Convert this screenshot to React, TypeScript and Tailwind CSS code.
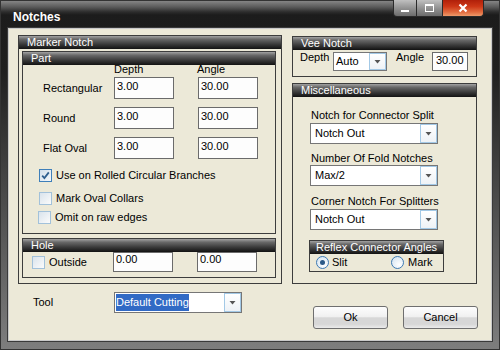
import React from 'react';

const Header: React.FC<{ title: string; center?: boolean }> = ({ title, center }) => (
  <div
    className={
      center
        ? 'relative z-10 h-[13px] shrink-0 flex items-center justify-center text-white text-[11px] leading-[13px] bg-[linear-gradient(#a2a2a2,#686868_25%,#383838_65%,#121212)]'
        : 'relative z-10 h-[13px] shrink-0 flex items-center pl-[8px] text-white text-[11px] leading-[13px] bg-[linear-gradient(#a2a2a2,#686868_25%,#383838_65%,#121212)]'
    }
  >
    {title}
  </div>
);

const Group: React.FC<{ title: string; className?: string; children?: React.ReactNode }> = ({
  title,
  className = '',
  children,
}) => (
  <div className={`flex flex-col border border-[#3d3d3d] ${className}`}>
    <Header title={title} />
    {children}
  </div>
);

const TextBox: React.FC<{ value: string; className: string }> = ({ value, className }) => (
  <div className={`shrink-0 border border-[#6b6b6b] bg-[#fdfdfd] text-[11px] leading-[13px] ${className}`}>
    {value}
  </div>
);

const Arrow = () => (
  <div className="w-[17px] shrink-0 flex items-center justify-center border border-[#a3c9e6] bg-[linear-gradient(#ffffff,#eef2f6)]">
    <svg width="7" height="4" viewBox="0 0 7 4">
      <path d="M0.5 0h6L3.5 3.5z" fill="#555" />
    </svg>
  </div>
);

const Combo: React.FC<{ value: string; className: string; selected?: boolean }> = ({
  value,
  className,
  selected,
}) => (
  <div className={`flex shrink-0 border border-[#767676] bg-white ${className}`}>
    {selected ? (
      <div className="flex-1 flex items-stretch py-[1px] pl-[1px]">
        <span className="bg-[#316ac5] text-white flex items-center">{value}</span>
      </div>
    ) : (
      <div className="flex-1 flex items-center pl-[4px]">{value}</div>
    )}
    <Arrow />
  </div>
);

const Check: React.FC<{ checked?: boolean }> = ({ checked }) =>
  checked ? (
    <span className="w-[13px] h-[13px] shrink-0 flex items-center justify-center border border-[#3f7fb9] bg-[linear-gradient(135deg,#d2dfeb,#f4f7fa)]">
      <svg width="9" height="9" viewBox="0 0 9 9">
        <path d="M1.2 4.6L3.4 7L7.8 1.4" fill="none" stroke="#2f5f8f" strokeWidth="1.8" />
      </svg>
    </span>
  ) : (
    <span className="w-[13px] h-[13px] shrink-0 border border-[#a2c1da] bg-[linear-gradient(135deg,#d9e3ec,#fbfbfb)]" />
  );

const Radio: React.FC<{ checked?: boolean }> = ({ checked }) => (
  <span className="w-[13px] h-[13px] shrink-0 rounded-full border border-[#3d7ab4] bg-[radial-gradient(circle_at_65%_70%,#ffffff,#cfe0ef)] flex items-center justify-center">
    {checked && <span className="w-[5px] h-[5px] rounded-full bg-[#2c5a88]" />}
  </span>
);

const Btn: React.FC<{ label: string }> = ({ label }) => (
  <div className="w-[75px] h-[23px] rounded-[3px] border border-[#6f6f6f] flex items-center justify-center bg-[linear-gradient(#fdfdfd,#f1f1f1_45%,#d7d7d7_52%,#d7d7d7_82%,#ebebeb)]">
    {label}
  </div>
);

const PartRow: React.FC<{ label: string; depth: string; angle: string; className?: string }> = ({
  label,
  depth,
  angle,
  className = '',
}) => (
  <div className={`flex items-center pl-[20px] h-[22px] ${className}`}>
    <div className="w-[71px]">{label}</div>
    <TextBox value={depth} className="w-[60px] h-[22px] pl-[2px] pt-[2px]" />
    <TextBox value={angle} className="ml-[24px] w-[60px] h-[22px] pl-[2px] pt-[2px]" />
  </div>
);

export default function App() {
  return (
    <div className="w-[500px] h-[350px] flex flex-col overflow-hidden font-['Liberation_Sans',Arial,sans-serif] text-[11px] leading-[13px] text-black shadow-[inset_0_0_0_1px_#333] bg-[linear-gradient(#8c8c8c_0px,#5a5a5a_7px,#2c2c2c_12px,#1c1c1c_15px,#1f1f1f_70px,#7e7e7e_350px)]">
      {/* title bar */}
      <div className="h-[27px] shrink-0 flex items-start">
        <div className="pl-[13px] pt-[10px] text-[12px] leading-[14px] font-bold text-white">Notches</div>
        <div className="ml-auto mr-[16px] flex h-[17px]">
          <div className="w-[24px] h-[17px] rounded-bl-[4px] border border-t-0 border-[#2a2a2a] bg-[linear-gradient(#c0c0c0,#939393_50%,#6c6c6c)] flex items-end justify-center pb-[4px]">
            <div className="w-[8px] h-[2px] bg-white" />
          </div>
          <div className="w-[25px] h-[17px] border-b border-[#2a2a2a] bg-[linear-gradient(#c0c0c0,#939393_50%,#6c6c6c)] flex items-center justify-center">
            <div className="w-[9px] h-[8px] border border-t-2 border-white" />
          </div>
          <div className="w-[42px] h-[17px] rounded-br-[4px] border border-t-0 border-[#2a2a2a] bg-[linear-gradient(#b0200a,#cc3616_40%,#e06a3e_75%,#ee9a6a)] flex items-center justify-center">
            <svg width="10" height="10" viewBox="0 0 10 10">
              <path d="M1.5 1.5L8.5 8.5M8.5 1.5L1.5 8.5" stroke="#fff" strokeWidth="2.2" />
            </svg>
          </div>
        </div>
      </div>

      {/* client area */}
      <div className="ml-[7px] w-[486px] h-[315px] shrink-0 border border-[#3a3a3a]">
        <div className="h-full border border-[#c9c9c9] bg-[#ece9d8] flex flex-col pt-[6px] pl-[9px]">
          <div className="flex items-start gap-[10px]">
            {/* left: marker notch */}
            <Group title="Marker Notch" className="w-[264px] h-[249px]">
              <div className="mt-[2px] ml-[3px] w-[254px] h-[183px] border border-[#3d3d3d] flex flex-col">
                <Header title="Part" />
                <div className="-mt-[2px] flex pl-[91px] h-[13px]">
                  <div className="w-[83px]">Depth</div>
                  <div>Angle</div>
                </div>
                <PartRow label="Rectangular" depth="3.00" angle="30.00" className="mt-[1px]" />
                <PartRow label="Round" depth="3.00" angle="30.00" className="mt-[8px]" />
                <PartRow label="Flat Oval" depth="3.00" angle="30.00" className="mt-[8px]" />
                <div className="mt-[10px] ml-[16px] flex items-center gap-[4px]">
                  <Check checked />
                  <span>Use on Rolled Circular Branches</span>
                </div>
                <div className="mt-[10px] ml-[16px] flex items-center gap-[4px]">
                  <Check />
                  <span>Mark Oval Collars</span>
                </div>
                <div className="mt-[6px] ml-[15px] flex items-center gap-[4px]">
                  <Check />
                  <span>Omit on raw edges</span>
                </div>
              </div>
              <Group title="Hole" className="mt-[4px] ml-[3px] w-[254px] h-[40px]">
                <div className="flex items-start h-[20px]">
                  <div className="w-[90px] pl-[9px] pt-[4px] flex items-center gap-[4px]">
                    <Check />
                    <span>Outside</span>
                  </div>
                  <TextBox value="0.00" className="w-[60px] h-[20px] pl-[2px]" />
                  <TextBox value="0.00" className="ml-[24px] w-[60px] h-[20px] pl-[2px]" />
                </div>
              </Group>
            </Group>

            {/* right column */}
            <div className="flex flex-col w-[185px]">
              <Group title="Vee Notch" className="mt-[1px] h-[41px]">
                <div className="mt-[2px] flex items-start pl-[7px]">
                  <div className="w-[33px] -mt-[1px]">Depth</div>
                  <Combo value="Auto" className="w-[54px] h-[19px] [&>div:first-child]:pl-[2px]" />
                  <div className="ml-[9px] w-[36px] -mt-[1px]">Angle</div>
                  <TextBox value="30.00" className="w-[36px] h-[19px] pl-[3px] pt-[1px]" />
                </div>
              </Group>
              <Group title="Miscellaneous" className="mt-[6px] h-[201px]">
                <div className="pl-[17px] flex flex-col items-start">
                  <div className="mt-[12px] pl-[1px]">Notch for Connector Split</div>
                  <Combo value="Notch Out" className="mt-[1px] w-[128px] h-[21px]" />
                  <div className="mt-[8px] pl-[1px]">Number Of Fold Notches</div>
                  <Combo value="Max/2" className="w-[128px] h-[21px]" />
                  <div className="mt-[9px] pl-[1px]">Corner Notch For Splitters</div>
                  <Combo value="Notch Out" className="mt-[1px] w-[128px] h-[21px]" />
                  <div className="mt-[10px] -ml-[1px] w-[135px] h-[32px] border border-[#3d3d3d] flex flex-col">
                    <Header title="Reflex Connector Angles" center />
                    <div className="flex items-center h-[17px] pl-[6px]">
                      <div className="w-[75px] flex items-center gap-[3px]">
                        <Radio checked />
                        <span>Slit</span>
                      </div>
                      <div className="flex items-center gap-[4px]">
                        <Radio />
                        <span>Mark</span>
                      </div>
                    </div>
                  </div>
                </div>
              </Group>
            </div>
          </div>

          {/* bottom row */}
          <div className="mt-[8px] flex items-start pl-[15px]">
            <div className="w-[81px] h-[21px] flex items-center">Tool</div>
            <Combo value="Default Cutting" className="w-[128px] h-[21px]" selected />
            <div className="ml-[71px] mt-[14px] flex gap-[15px]">
              <Btn label="Ok" />
              <Btn label="Cancel" />
            </div>
          </div>
        </div>
      </div>
    </div>
  );
}
